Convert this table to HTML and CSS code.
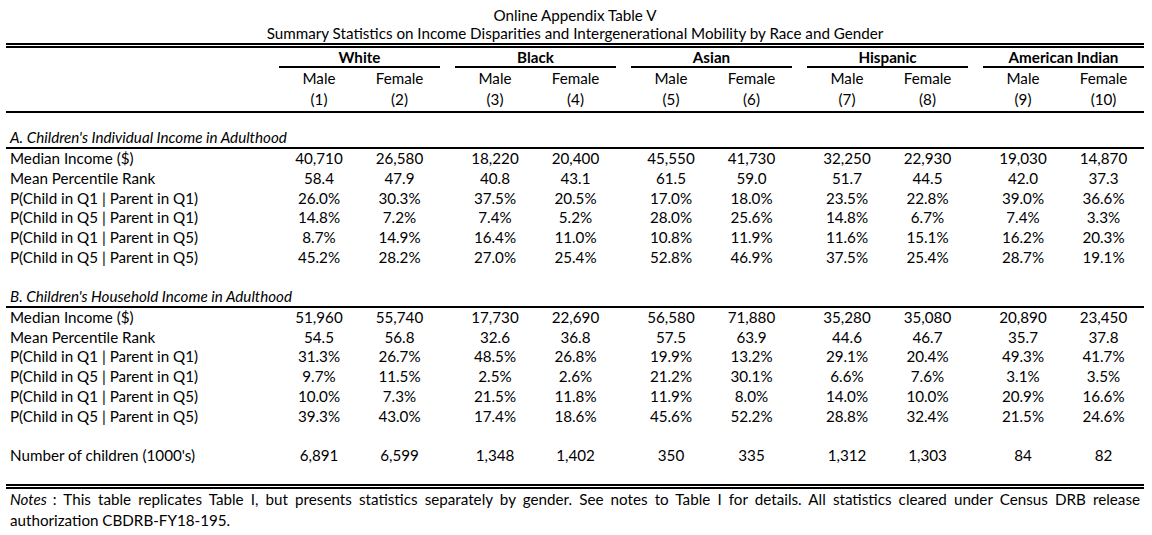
FILE: index.html
```html
<!DOCTYPE html>
<html lang="en">
<head>
<meta charset="utf-8">
<title>Online Appendix Table V</title>
<link rel="stylesheet" href="styles.css">
</head>
<body>
<div class="page">
  <div class="caption">
    <div class="cap-line">Online Appendix Table V</div>
    <div class="cap-line">Summary Statistics on Income Disparities and Intergenerational Mobility by Race and Gender</div>
  </div>

  <div class="rule-double"></div>

  <div class="groups">
    <div></div>
    <div class="group">White</div><div></div>
    <div class="group">Black</div><div></div>
    <div class="group">Asian</div><div></div>
    <div class="group">Hispanic</div><div></div>
    <div class="group">American Indian</div>
  </div>

  <div class="row head-row">
    <div></div>
    <div>Male</div><div>Female</div><div></div>
    <div>Male</div><div>Female</div><div></div>
    <div>Male</div><div>Female</div><div></div>
    <div>Male</div><div>Female</div><div></div>
    <div>Male</div><div>Female</div>
  </div>
  <div class="row num-row">
    <div></div>
    <div>(1)</div><div>(2)</div><div></div>
    <div>(3)</div><div>(4)</div><div></div>
    <div>(5)</div><div>(6)</div><div></div>
    <div>(7)</div><div>(8)</div><div></div>
    <div>(9)</div><div>(10)</div>
  </div>

  <div class="section-title first">A. Children's Individual Income in Adulthood</div>
  <div class="section-body">
    <div class="row"><div class="label">Median Income ($)</div><div>40,710</div><div>26,580</div><div></div><div>18,220</div><div>20,400</div><div></div><div>45,550</div><div>41,730</div><div></div><div>32,250</div><div>22,930</div><div></div><div>19,030</div><div>14,870</div></div>
    <div class="row"><div class="label">Mean Percentile Rank</div><div>58.4</div><div>47.9</div><div></div><div>40.8</div><div>43.1</div><div></div><div>61.5</div><div>59.0</div><div></div><div>51.7</div><div>44.5</div><div></div><div>42.0</div><div>37.3</div></div>
    <div class="row"><div class="label">P(Child in Q1 | Parent in Q1)</div><div>26.0%</div><div>30.3%</div><div></div><div>37.5%</div><div>20.5%</div><div></div><div>17.0%</div><div>18.0%</div><div></div><div>23.5%</div><div>22.8%</div><div></div><div>39.0%</div><div>36.6%</div></div>
    <div class="row"><div class="label">P(Child in Q5 | Parent in Q1)</div><div>14.8%</div><div>7.2%</div><div></div><div>7.4%</div><div>5.2%</div><div></div><div>28.0%</div><div>25.6%</div><div></div><div>14.8%</div><div>6.7%</div><div></div><div>7.4%</div><div>3.3%</div></div>
    <div class="row"><div class="label">P(Child in Q1 | Parent in Q5)</div><div>8.7%</div><div>14.9%</div><div></div><div>16.4%</div><div>11.0%</div><div></div><div>10.8%</div><div>11.9%</div><div></div><div>11.6%</div><div>15.1%</div><div></div><div>16.2%</div><div>20.3%</div></div>
    <div class="row"><div class="label">P(Child in Q5 | Parent in Q5)</div><div>45.2%</div><div>28.2%</div><div></div><div>27.0%</div><div>25.4%</div><div></div><div>52.8%</div><div>46.9%</div><div></div><div>37.5%</div><div>25.4%</div><div></div><div>28.7%</div><div>19.1%</div></div>
  </div>

  <div class="section-title second">B. Children's Household Income in Adulthood</div>
  <div class="section-body">
    <div class="row"><div class="label">Median Income ($)</div><div>51,960</div><div>55,740</div><div></div><div>17,730</div><div>22,690</div><div></div><div>56,580</div><div>71,880</div><div></div><div>35,280</div><div>35,080</div><div></div><div>20,890</div><div>23,450</div></div>
    <div class="row"><div class="label">Mean Percentile Rank</div><div>54.5</div><div>56.8</div><div></div><div>32.6</div><div>36.8</div><div></div><div>57.5</div><div>63.9</div><div></div><div>44.6</div><div>46.7</div><div></div><div>35.7</div><div>37.8</div></div>
    <div class="row"><div class="label">P(Child in Q1 | Parent in Q1)</div><div>31.3%</div><div>26.7%</div><div></div><div>48.5%</div><div>26.8%</div><div></div><div>19.9%</div><div>13.2%</div><div></div><div>29.1%</div><div>20.4%</div><div></div><div>49.3%</div><div>41.7%</div></div>
    <div class="row"><div class="label">P(Child in Q5 | Parent in Q1)</div><div>9.7%</div><div>11.5%</div><div></div><div>2.5%</div><div>2.6%</div><div></div><div>21.2%</div><div>30.1%</div><div></div><div>6.6%</div><div>7.6%</div><div></div><div>3.1%</div><div>3.5%</div></div>
    <div class="row"><div class="label">P(Child in Q1 | Parent in Q5)</div><div>10.0%</div><div>7.3%</div><div></div><div>21.5%</div><div>11.8%</div><div></div><div>11.9%</div><div>8.0%</div><div></div><div>14.0%</div><div>10.0%</div><div></div><div>20.9%</div><div>16.6%</div></div>
    <div class="row"><div class="label">P(Child in Q5 | Parent in Q5)</div><div>39.3%</div><div>43.0%</div><div></div><div>17.4%</div><div>18.6%</div><div></div><div>45.6%</div><div>52.2%</div><div></div><div>28.8%</div><div>32.4%</div><div></div><div>21.5%</div><div>24.6%</div></div>
  </div>

  <div class="row count-row"><div class="label">Number of children (1000's)</div><div>6,891</div><div>6,599</div><div></div><div>1,348</div><div>1,402</div><div></div><div>350</div><div>335</div><div></div><div>1,312</div><div>1,303</div><div></div><div>84</div><div>82</div></div>

  <div class="rule-double bottom"></div>

  <p class="notes"><em class="notes-tag">Notes</em><span>: This table replicates Table I, but presents statistics separately by gender. See notes to Table I for details. All statistics cleared under Census DRB release</span> <span>authorization CBDRB-FY18-195.</span></p>
</div>
</body>
</html>
```

FILE: styles.css
```css
html, body {
  margin: 0;
  padding: 0;
  background: #ffffff;
}

body {
  font-family: "Lato", "Open Sans", "Liberation Sans", sans-serif;
  font-size: 15.2px;
  color: #000000;
}

.page {
  width: 1138px;
  margin-left: 6px;
  padding-top: 6px;
}

.caption {
  text-align: center;
}

.cap-line {
  height: 18px;
  line-height: 18px;
  white-space: nowrap;
}

.rule-double {
  margin-top: 1px;
  border-top: 5px double #000000;
  height: 0;
}

.groups {
  display: grid;
  grid-template-columns: 273px 161px 15px 161px 15px 161px 15px 161px 15px 161px;
  height: 18px;
}

.group {
  font-weight: 700;
  text-align: center;
  line-height: 18px;
  border-bottom: 2px solid #000000;
}

.row {
  display: grid;
  grid-template-columns: 273px 80px 81px 15px 80px 81px 15px 80px 81px 15px 80px 81px 15px 80px 81px;
  height: 19.8px;
  line-height: 19.8px;
  text-align: center;
  white-space: nowrap;
}

.row .label {
  text-align: left;
  padding-left: 4px;
}

.head-row {
  margin-top: 2px;
  height: 20px;
  line-height: 20px;
}

.num-row {
  height: 23px;
  line-height: 23px;
  border-bottom: 2px solid #000000;
}

.section-title {
  font-style: italic;
  padding-left: 4px;
  line-height: 20px;
  border-bottom: 2px solid #000000;
}

.section-title.first {
  padding-top: 14px;
}

.section-title.second {
  padding-top: 18px;
}

.count-row {
  margin-top: 19px;
}

.rule-double.bottom {
  margin-top: 19px;
}

.notes {
  margin: 0;
  padding: 0 4px;
  line-height: 21px;
  text-align: justify;
}

.notes-tag {
  display: inline-block;
  margin-right: 6px;
}
```
